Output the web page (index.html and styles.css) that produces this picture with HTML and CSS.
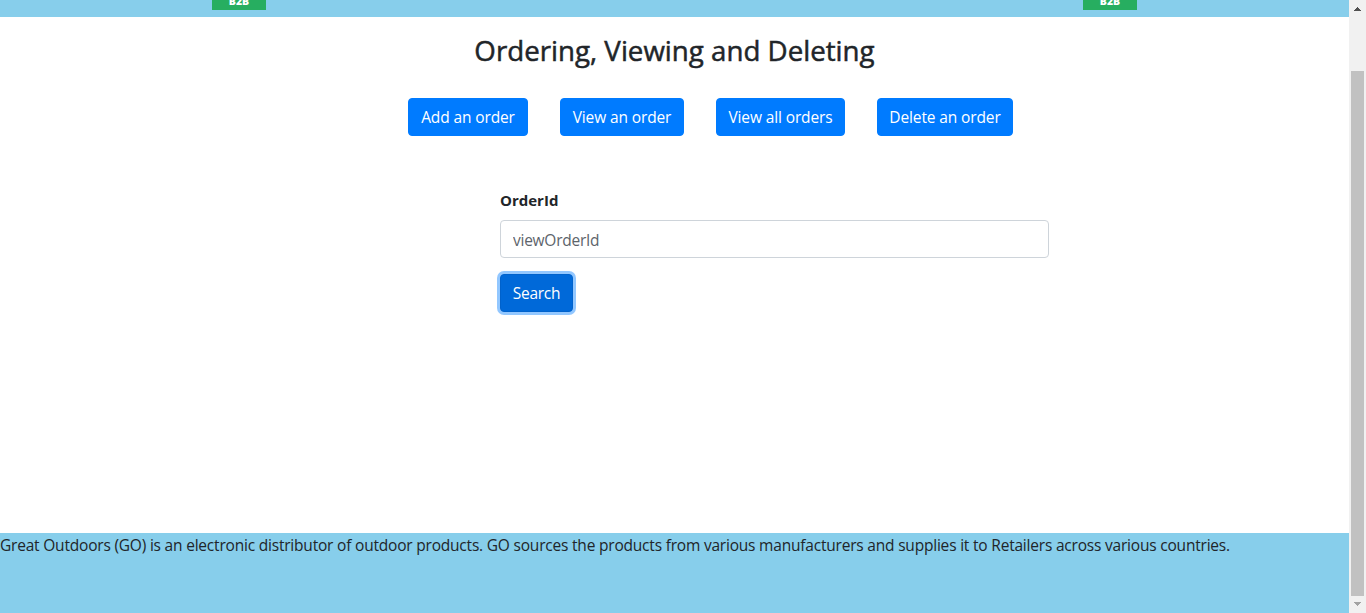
FILE: index.html
```html
<!DOCTYPE html>
<html lang="en">
<head>
<meta charset="utf-8">
<title>Great Outdoors</title>
<link rel="stylesheet" href="styles.css">
</head>
<body>
<div class="viewport">
  <div class="page">
    <header class="banner">
      <span class="logo"><span class="logo-text">B2B</span></span>
      <span class="logo"><span class="logo-text">B2B</span></span>
    </header>
    <main class="content">
      <h3 class="title">Ordering, Viewing and Deleting</h3>
      <nav class="actions">
        <button class="btn btn-add">Add an order</button>
        <button class="btn btn-view">View an order</button>
        <button class="btn btn-all">View all orders</button>
        <button class="btn btn-delete">Delete an order</button>
      </nav>
      <form class="search-form">
        <label class="label" for="order-id">OrderId</label>
        <input class="field" id="order-id" type="text" placeholder="viewOrderId">
        <button class="btn btn-search" type="button">Search</button>
      </form>
    </main>
    <footer class="footer">Great Outdoors (GO) is an electronic distributor of outdoor products. GO sources the products from various manufacturers and supplies it to Retailers across various countries.</footer>
  </div>
  <div class="scrollbar">
    <svg class="arrow" width="17" height="17" viewBox="0 0 17 17" shape-rendering="crispEdges"><path fill="#505050" d="M8 7h1v1h1v1h1v1h1v1H5v-1h1V9h1V8h1z"/></svg>
    <div class="thumb"></div>
    <svg class="arrow" width="17" height="17" viewBox="0 0 17 17" shape-rendering="crispEdges"><path fill="#a3a3a3" d="M5 6h7v1h-1v1h-1v1H9v1H8V9H7V8H6V7H5z"/></svg>
  </div>
</div>
</body>
</html>
```
FILE: styles.css
```css
* { box-sizing: border-box; }
body {
  margin: 0;
  overflow: hidden;
  background: #fff;
  color: #212529;
  font: 400 15.5px/24px "Open Sans", "Noto Sans", sans-serif;
}
.viewport { display: flex; width: 1366px; height: 613px; }
.page { width: 1349px; display: flex; flex-direction: column; }
.banner {
  display: flex;
  height: 17px;
  padding-left: 212px;
  gap: 817px;
  background: #87ceeb;
}
.logo {
  display: flex;
  justify-content: center;
  width: 54px;
  height: 10px;
  background: #27ae60;
  color: #fff;
}
.logo-text { margin-top: -5px; font-size: 10.5px; font-weight: 800; line-height: 12px; }
.content { flex: 1; }
.title {
  margin: 16px 0 0;
  font-size: 27.7px;
  font-weight: 500;
  line-height: 34px;
  text-align: center;
  -webkit-text-stroke: .5px #212529;
}
.actions { display: flex; gap: 32px; padding: 31px 0 0 408px; }
.btn {
  height: 38px;
  padding: 0;
  border: 1px solid #007bff;
  border-radius: 4px;
  background: #007bff;
  color: #fff;
  font: inherit;
  letter-spacing: -.12px;
  white-space: nowrap;
}
.btn-add { width: 120px; }
.btn-view { width: 124px; }
.btn-all { width: 129px; }
.btn-delete { width: 136px; }
.search-form {
  display: flex;
  flex-direction: column;
  align-items: flex-start;
  margin: 52px 0 0 500px;
}
.label { height: 24px; margin-bottom: 8px; font-size: 15px; font-weight: 700; }
.field {
  width: 549px;
  height: 38px;
  padding: 2px 12px 0;
  border: 1px solid #ced4da;
  border-radius: 4px;
  color: #495057;
  font: inherit;
  letter-spacing: -.25px;
}
.field::placeholder { color: #5d646b; opacity: 1; }
.btn-search {
  width: 73px;
  margin-top: 16px;
  border-color: #0062cc;
  background: #0069d9;
  box-shadow: 0 0 0 3px rgba(38, 143, 255, .5);
  letter-spacing: -.3px;
}
.footer {
  height: 80px;
  background: #87ceeb;
  letter-spacing: -.202px;
  white-space: nowrap;
}
.scrollbar {
  display: flex;
  flex-direction: column;
  width: 17px;
  background: #f1f1f1;
}
.arrow { display: block; flex: none; }
.thumb { width: 13px; height: 525px; margin: 54px 0 0 2px; background: #c1c1c1; }
```
